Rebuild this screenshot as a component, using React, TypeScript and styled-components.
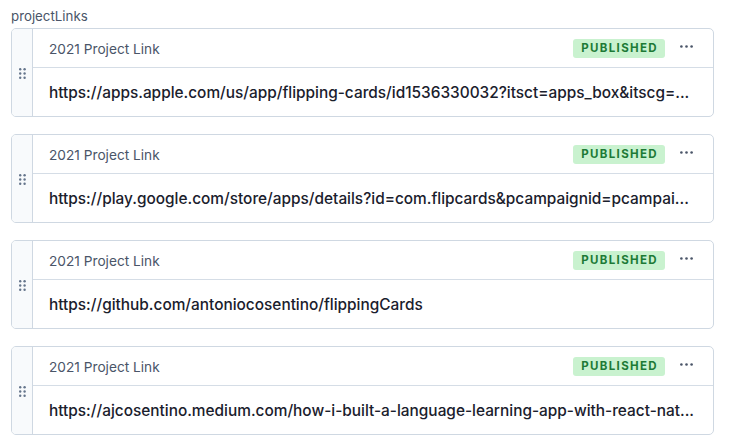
import React from "react";
import styled, { createGlobalStyle } from "styled-components";

const Global = createGlobalStyle`
  html, body { margin: 0; padding: 0; background: #ffffff; }
  body { font-family: Inter, "Noto Sans", "Liberation Sans", sans-serif; -webkit-font-smoothing: antialiased; }
  * { box-sizing: border-box; }
`;

const Page = styled.div`
  padding: 8px 15px 0 11px;
  display: flex;
  flex-direction: column;
`;

const FieldLabel = styled.div`
  font-size: 13.3px;
  line-height: 17px;
  color: #4a5568;
  margin-bottom: 3px;
`;

const List = styled.div`
  display: flex;
  flex-direction: column;
  gap: 17px;
`;

const Card = styled.div`
  display: grid;
  grid-template-columns: 21px 1fr;
  height: 89px;
  border: 1px solid #cfd8e2;
  border-radius: 5px;
  overflow: hidden;
`;

const Handle = styled.div`
  background: #f8fafc;
  border-right: 1px solid #cfd8e2;
  display: flex;
  align-items: center;
  justify-content: center;
  padding-top: 1px;
  color: #64748b;
`;

const Body = styled.div`
  display: grid;
  grid-template-rows: 39px 1fr;
  min-width: 0;
`;

const Header = styled.div`
  display: flex;
  align-items: center;
  padding: 1px 12px 0 16px;
  border-bottom: 1px solid #d5dde6;
`;

const Title = styled.div`
  flex: 1;
  font-size: 13.7px;
  color: #4a5568;
`;

const Badge = styled.span`
  background: #c9f2cf;
  color: #1d7a36;
  font-size: 11.5px;
  font-weight: 700;
  letter-spacing: 1.35px;
  line-height: 19px;
  height: 19px;
  padding: 0 7px 0 8px;
  border-radius: 3px;
`;

const More = styled.div`
  width: 30px;
  margin-left: 6px;
  display: flex;
  justify-content: center;
  align-items: center;
  color: #4a5568;
  margin-top: -4px;
`;

const Url = styled.div`
  display: flex;
  align-items: center;
  padding: 0 16px;
  font-size: 15.4px;
  font-weight: 500;
  color: #1a202c;
  min-width: 0;
  padding-top: 1px;
`;

const UrlText = styled.span`
  white-space: nowrap;
  overflow: hidden;
  text-overflow: ellipsis;
`;

const GripIcon = () => (
  <svg width="7" height="11" viewBox="0 0 7 11" fill="currentColor">
    <circle cx="1.2" cy="1.2" r="1.2" />
    <circle cx="5.6" cy="1.2" r="1.2" />
    <circle cx="1.2" cy="5.5" r="1.2" />
    <circle cx="5.6" cy="5.5" r="1.2" />
    <circle cx="1.2" cy="9.8" r="1.2" />
    <circle cx="5.6" cy="9.8" r="1.2" />
  </svg>
);

const DotsIcon = () => (
  <svg width="13" height="3" viewBox="0 0 13 3" fill="currentColor">
    <circle cx="1.4" cy="1.5" r="1.3" />
    <circle cx="6.5" cy="1.5" r="1.3" />
    <circle cx="11.6" cy="1.5" r="1.3" />
  </svg>
);

const links = [
  "https://apps.apple.com/us/app/flipping-cards/id1536330032?itsct=apps_box&itscg=...",
  "https://play.google.com/store/apps/details?id=com.flipcards&pcampaignid=pcampai...",
  "https://github.com/antoniocosentino/flippingCards",
  "https://ajcosentino.medium.com/how-i-built-a-language-learning-app-with-react-nat...",
];

export default function App() {
  return (
    <>
      <Global />
      <Page>
        <FieldLabel>projectLinks</FieldLabel>
        <List>
          {links.map((url) => (
            <Card key={url}>
              <Handle>
                <GripIcon />
              </Handle>
              <Body>
                <Header>
                  <Title>2021 Project Link</Title>
                  <Badge>PUBLISHED</Badge>
                  <More>
                    <DotsIcon />
                  </More>
                </Header>
                <Url>
                  <UrlText>{url}</UrlText>
                </Url>
              </Body>
            </Card>
          ))}
        </List>
      </Page>
    </>
  );
}
